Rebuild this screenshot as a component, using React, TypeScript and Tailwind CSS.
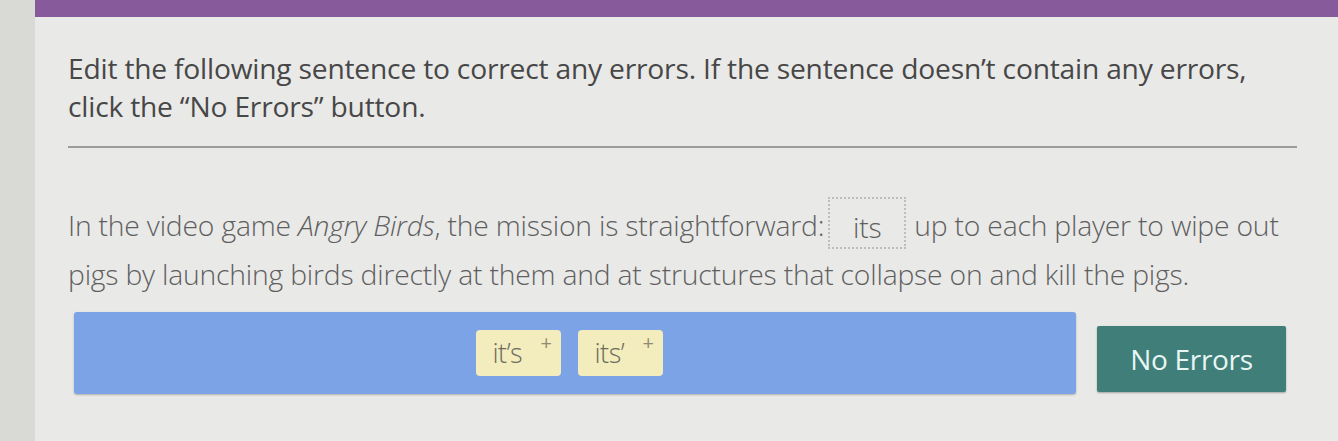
export default function App() {
  return (
    <div className="flex h-[441px] w-[1338px] overflow-hidden bg-[#d9d9d5] font-['Open_Sans','Noto_Sans',sans-serif]">
      <div className="w-[35px] shrink-0" />
      <div className="flex flex-1 flex-col bg-[#e9e9e8]">
        <div className="h-[17px] bg-[#875b9b]" />

        <div className="pl-[33px] pr-[41px]">
          <h1 className="mt-[32px] whitespace-nowrap text-[28.2px] leading-[38px] tracking-[-0.2px] text-[#474747]">
            Edit the following sentence to correct any errors. If the sentence
            doesn’t contain any errors,
            <br />
            click the “No Errors” button.
          </h1>
          <div className="mt-[21px] h-[2px] bg-[#9c9c9c]" />

          <p className="mt-[53px] whitespace-nowrap text-[28.3px] font-light leading-[49px] tracking-[-0.2px] text-[#5f5f5f]">
            In the video game <em>Angry Birds</em>, the mission is
            straightforward:
            <span className="-my-[5px] ml-[4px] mr-[8px] inline-block h-[52px] w-[78px] -translate-y-[5px] border-2 border-dotted border-[#bdbdbd] text-center align-middle leading-[56px]">
              its
            </span>
            up to each player to wipe out
            <br />
            pigs by launching birds directly at them and at structures that
            collapse on and kill the pigs.
          </p>

          <div className="mt-[13px] flex items-center">
            <div className="ml-[6px] flex h-[82px] w-[1002px] items-center justify-center gap-[17px] rounded-[3px] bg-[#7da3e7] pr-[12px] shadow-[0_1px_2px_rgba(0,0,0,0.25)]">
              <Chip label="it’s" />
              <Chip label="its’" />
            </div>
            <button className="ml-[21px] mt-[12px] h-[66px] w-[189px] rounded-[2px] bg-[#3f7e79] text-[28px] tracking-[-0.3px] text-[#e8f6f3] shadow-[0_1px_2px_rgba(0,0,0,0.3)]">
              No Errors
            </button>
          </div>
        </div>
      </div>
    </div>
  );
}

function Chip({ label }: { label: string }) {
  return (
    <div className="relative flex h-[46px] w-[85px] items-center rounded-[4px] bg-[#f3edbd] pl-[17px] text-[27px] font-light tracking-[-0.5px] text-[#6b6b5e]">
      {label}
      <span className="absolute right-[9px] top-[3px] text-[20px] font-normal leading-none text-[#8f8a74]">
        +
      </span>
    </div>
  );
}
